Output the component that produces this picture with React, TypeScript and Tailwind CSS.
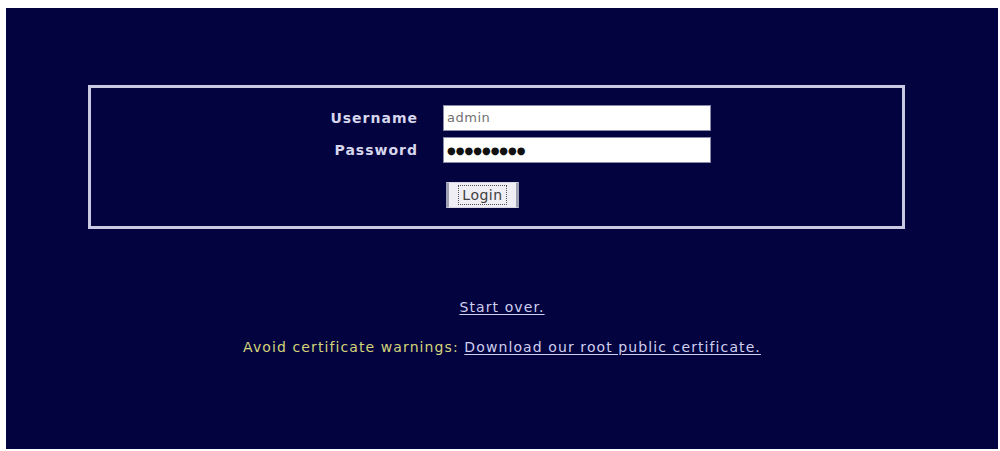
export default function App() {
  return (
    <div className="h-[451px] w-[1000px] bg-white pt-[8px] font-['DejaVu_Sans',sans-serif]">
      <div className="ml-[6px] flex h-[441px] w-[992px] flex-col bg-[#03033f] pt-[77px]">
        <div className="ml-[82px] h-[144px] w-[817px] border-[3px] border-[#c9c9e2] pt-[17px]">
          <div className="grid grid-cols-[327px_268px] gap-x-[25px] gap-y-[6px]">
            <label className="flex h-[26px] items-center justify-end text-[14px] font-bold tracking-[1px] text-[#d6d6ec]">
              Username
            </label>
            <div className="flex h-[26px] items-center border border-[#8a8aa8] bg-white px-[3px] text-[13px] tracking-[0.5px] text-[#707070]">
              admin
            </div>
            <label className="flex h-[26px] items-center justify-end text-[14px] font-bold tracking-[1px] text-[#d6d6ec]">
              Password
            </label>
            <div className="flex h-[26px] items-center border border-[#8a8aa8] bg-white px-[3px] text-[10px] tracking-[0px] text-[#111]">
              ●●●●●●●●●
            </div>
            <div />
            <div className="pt-[13px] pl-[3px]">
              <button className="flex h-[26px] w-[73px] items-center justify-center border-x-[3px] border-y border-x-[#a0a0b4] border-y-[#d8d8e4] bg-[#eeeef4] text-[14px] tracking-[0.5px] text-[#404040]">
                <span className="border border-dotted border-[#505050] px-[3px] leading-[18px]">Login</span>
              </button>
            </div>
          </div>
        </div>
        <div className="mt-[68px] flex flex-col items-center gap-[20px] text-[14px] leading-[20px] tracking-[1.1px]">
          <a href="#" className="text-[#cfcff0] underline underline-offset-2">
            Start over.
          </a>
          <p className="text-[#d4d47a]">
            Avoid certificate warnings:{' '}
            <a href="#" className="text-[#cfcff0] underline underline-offset-2">
              Download our root public certificate.
            </a>
          </p>
        </div>
      </div>
    </div>
  );
}
